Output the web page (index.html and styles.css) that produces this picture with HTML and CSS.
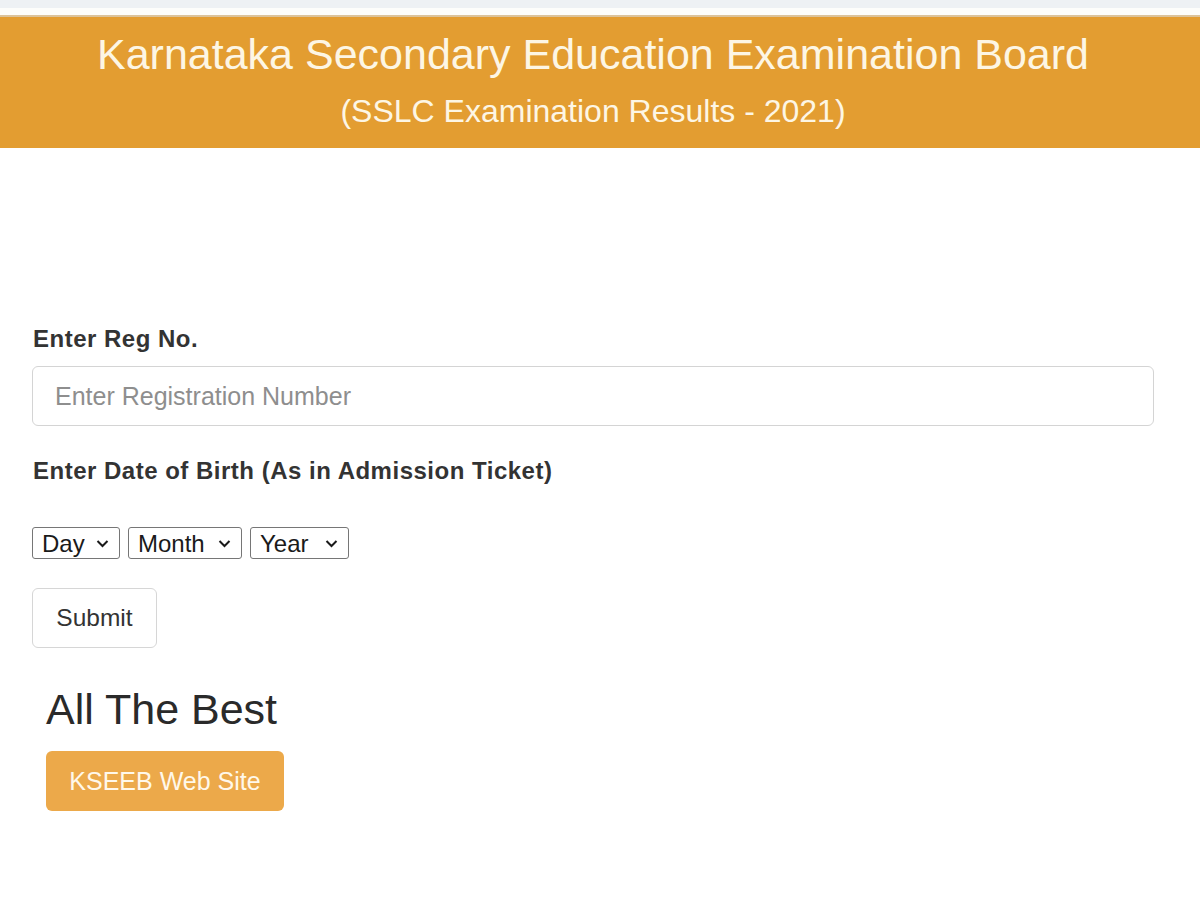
FILE: index.html
```html
<!DOCTYPE html>
<html>
<head>
    <link rel="stylesheet" href="styles.css">
</head>
<body>
    <div class="topbar"></div>
    <div class="header">
        <h1>Karnataka Secondary Education Examination Board</h1>
        <h2>(SSLC Examination Results - 2021)</h2>
    </div>

    <div class="content">
        <label class="field-label" for="regno">Enter Reg No.</label>
        <input type="text" id="regno" class="reg-input" placeholder="Enter Registration Number">

        <label class="field-label dob-label">Enter Date of Birth (As in Admission Ticket)</label>

        <div class="dob-row">
            <span class="dob-box">
                <select class="dob-select"><option>Day</option></select>
                <svg class="chev" width="13" height="9" viewBox="0 0 13 9"><path d="M1.5 2 L6.5 7 L11.5 2" fill="none" stroke="#1a1a1a" stroke-width="2"/></svg>
            </span>
            <span class="dob-box month-box">
                <select class="dob-select"><option>Month</option></select>
                <svg class="chev" width="13" height="9" viewBox="0 0 13 9"><path d="M1.5 2 L6.5 7 L11.5 2" fill="none" stroke="#1a1a1a" stroke-width="2"/></svg>
            </span>
            <span class="dob-box year-box">
                <select class="dob-select"><option>Year</option></select>
                <svg class="chev" width="13" height="9" viewBox="0 0 13 9"><path d="M1.5 2 L6.5 7 L11.5 2" fill="none" stroke="#1a1a1a" stroke-width="2"/></svg>
            </span>
        </div>

        <button class="submit-btn">Submit</button>

        <div class="best">
            <h3>All The Best</h3>
            <a class="site-btn" href="#">KSEEB Web Site</a>
        </div>
    </div>
</body>
</html>
```

FILE: styles.css
```css
body {
    margin: 0;
    font-family: "Liberation Sans", Arial, sans-serif;
    color: #333;
    background: #fff;
}
.topbar {
    height: 8px;
    background: #eef1f4;
    border-bottom: 7px solid #fdfdfb;
}
.header {
    background: #e39d31;
    border-top: 2px solid #dcc39b;
    color: #fdf6e4;
    text-align: center;
    height: 133px;
    box-sizing: border-box;
    padding: 13px 14px 0 0;
}
.header h1 {
    margin: 0;
    font-size: 43px;
    font-weight: normal;
    line-height: 48px;
}
.header h2 {
    margin: 15px 0 0;
    font-size: 32px;
    font-weight: normal;
    line-height: 36px;
}
.content {
    padding: 177px 46px 0 32px;
}
.field-label {
    display: block;
    font-weight: bold;
    font-size: 24px;
    letter-spacing: 0.5px;
    line-height: 28px;
    color: #333;
    margin: 0 0 13px 1px;
}
.reg-input {
    display: block;
    width: 100%;
    height: 60px;
    box-sizing: border-box;
    border: 1.5px solid #d4d4d4;
    border-radius: 6px;
    padding: 0 22px;
    font-family: inherit;
    font-size: 25px;
    color: #555;
    margin-bottom: 31px;
}
.reg-input::placeholder {
    color: #8e8e8e;
}
.dob-label {
    margin-bottom: 42px;
}
.dob-row {
    display: flex;
    gap: 8px;
    margin-bottom: 29px;
}
.dob-box {
    display: inline-flex;
    align-items: center;
    height: 32px;
    box-sizing: border-box;
    border: 1px solid #767676;
    border-radius: 3px;
    padding: 0 10px 0 9px;
    background: #fff;
}
.dob-select {
    appearance: none;
    -webkit-appearance: none;
    border: none;
    outline: none;
    background: transparent;
    padding: 0;
    margin: 0 11px 0 0;
    font-family: inherit;
    font-size: 24px;
    color: #1a1a1a;
}
.month-box .dob-select {
    margin-right: 13px;
}
.year-box .dob-select {
    margin-right: 16px;
}
.chev {
    display: block;
}
.submit-btn {
    display: block;
    width: 125px;
    height: 60px;
    font-family: inherit;
    font-size: 24.5px;
    color: #333;
    background: #fff;
    border: 1.5px solid #d6d6d6;
    border-radius: 6px;
}
.best {
    padding-left: 14px;
    margin-top: 37px;
}
.best h3 {
    margin: 0;
    font-size: 43px;
    font-weight: normal;
    line-height: 48px;
    color: #2a2a2a;
}
.site-btn {
    display: inline-block;
    margin-top: 18px;
    width: 238px;
    height: 60px;
    line-height: 60px;
    text-align: center;
    background: #eca94a;
    color: #fff8ea;
    font-size: 25px;
    border-radius: 6px;
    text-decoration: none;
}
```
